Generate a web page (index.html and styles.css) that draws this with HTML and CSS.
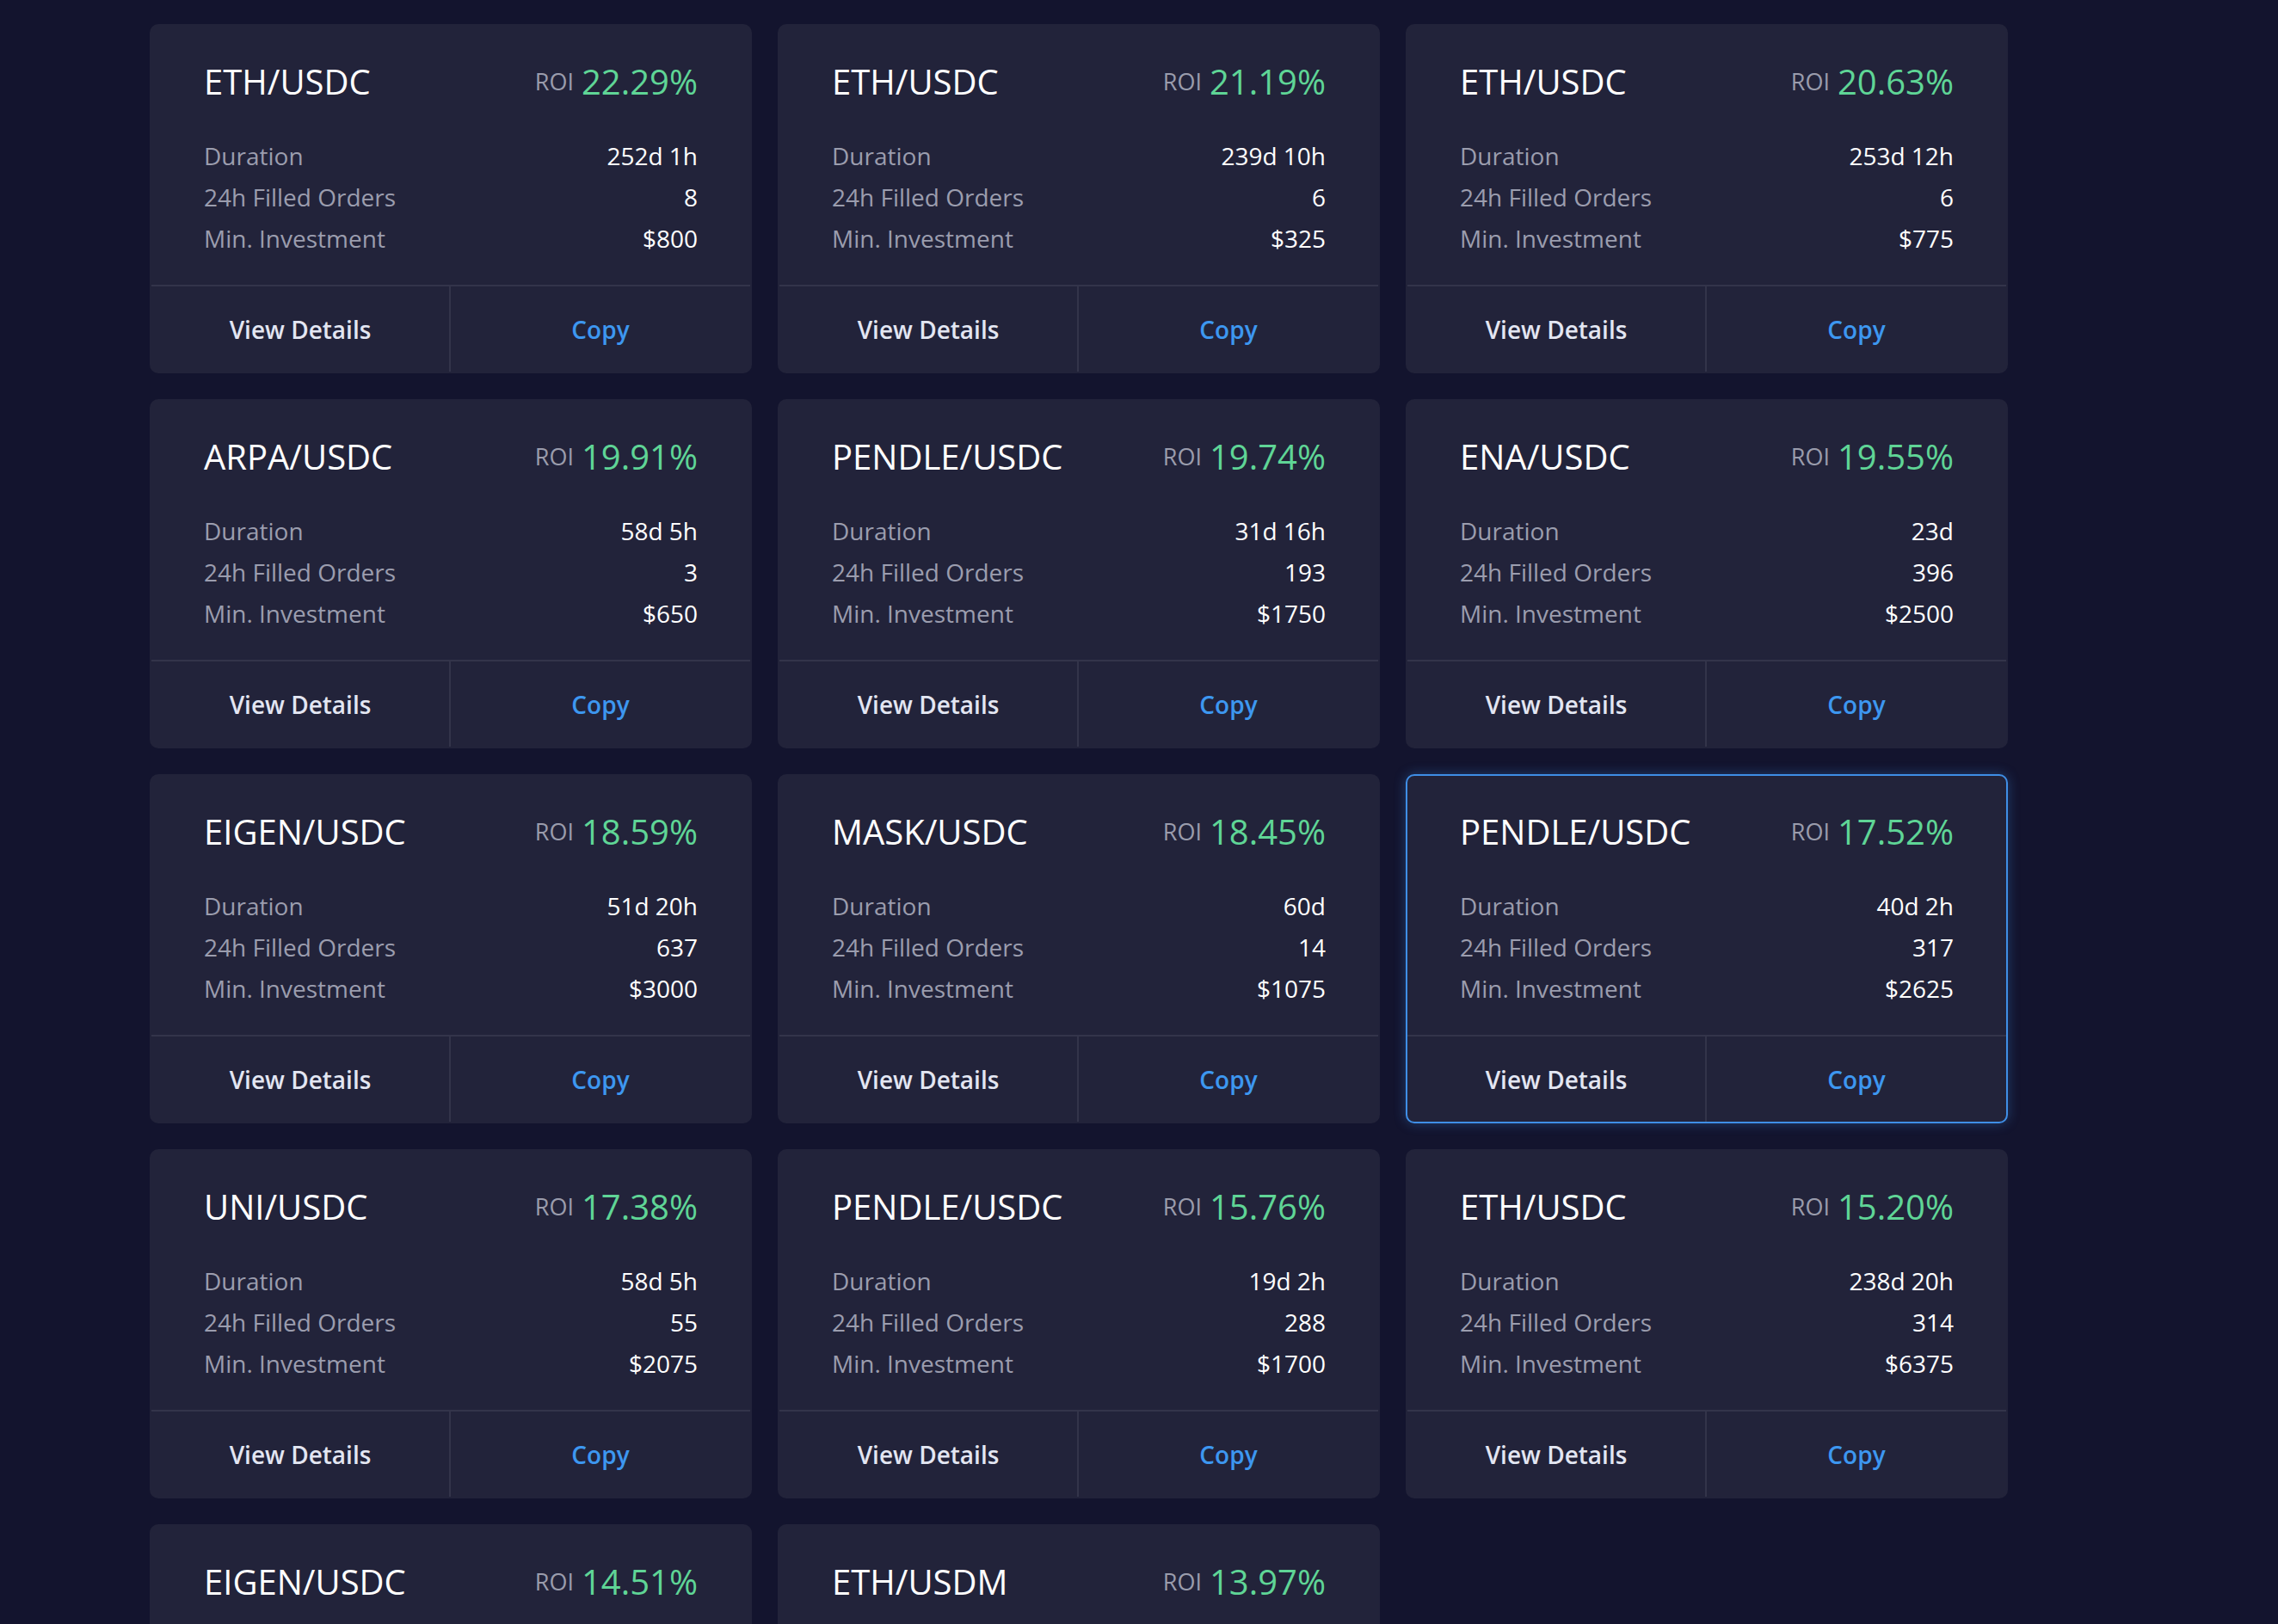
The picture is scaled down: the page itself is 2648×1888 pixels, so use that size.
FILE: index.html
```html
<!DOCTYPE html>
<html lang="en">
<head>
<meta charset="utf-8">
<title>Grid Bots</title>
<link rel="stylesheet" href="styles.css">
</head>
<body>
<main class="grid">
  <article class="card">
    <div class="card-body">
      <div class="card-head"><span class="pair">ETH/USDC</span><span class="roi"><span class="roi-label">ROI</span><span class="roi-value">22.29%</span></span></div>
      <div class="row"><span class="label">Duration</span><span class="value">252d 1h</span></div>
      <div class="row"><span class="label">24h Filled Orders</span><span class="value">8</span></div>
      <div class="row"><span class="label">Min. Investment</span><span class="value">$800</span></div>
    </div>
    <div class="card-foot"><button class="btn btn-details">View Details</button><button class="btn btn-copy">Copy</button></div>
  </article>
  <article class="card">
    <div class="card-body">
      <div class="card-head"><span class="pair">ETH/USDC</span><span class="roi"><span class="roi-label">ROI</span><span class="roi-value">21.19%</span></span></div>
      <div class="row"><span class="label">Duration</span><span class="value">239d 10h</span></div>
      <div class="row"><span class="label">24h Filled Orders</span><span class="value">6</span></div>
      <div class="row"><span class="label">Min. Investment</span><span class="value">$325</span></div>
    </div>
    <div class="card-foot"><button class="btn btn-details">View Details</button><button class="btn btn-copy">Copy</button></div>
  </article>
  <article class="card">
    <div class="card-body">
      <div class="card-head"><span class="pair">ETH/USDC</span><span class="roi"><span class="roi-label">ROI</span><span class="roi-value">20.63%</span></span></div>
      <div class="row"><span class="label">Duration</span><span class="value">253d 12h</span></div>
      <div class="row"><span class="label">24h Filled Orders</span><span class="value">6</span></div>
      <div class="row"><span class="label">Min. Investment</span><span class="value">$775</span></div>
    </div>
    <div class="card-foot"><button class="btn btn-details">View Details</button><button class="btn btn-copy">Copy</button></div>
  </article>
  <article class="card">
    <div class="card-body">
      <div class="card-head"><span class="pair">ARPA/USDC</span><span class="roi"><span class="roi-label">ROI</span><span class="roi-value">19.91%</span></span></div>
      <div class="row"><span class="label">Duration</span><span class="value">58d 5h</span></div>
      <div class="row"><span class="label">24h Filled Orders</span><span class="value">3</span></div>
      <div class="row"><span class="label">Min. Investment</span><span class="value">$650</span></div>
    </div>
    <div class="card-foot"><button class="btn btn-details">View Details</button><button class="btn btn-copy">Copy</button></div>
  </article>
  <article class="card">
    <div class="card-body">
      <div class="card-head"><span class="pair">PENDLE/USDC</span><span class="roi"><span class="roi-label">ROI</span><span class="roi-value">19.74%</span></span></div>
      <div class="row"><span class="label">Duration</span><span class="value">31d 16h</span></div>
      <div class="row"><span class="label">24h Filled Orders</span><span class="value">193</span></div>
      <div class="row"><span class="label">Min. Investment</span><span class="value">$1750</span></div>
    </div>
    <div class="card-foot"><button class="btn btn-details">View Details</button><button class="btn btn-copy">Copy</button></div>
  </article>
  <article class="card">
    <div class="card-body">
      <div class="card-head"><span class="pair">ENA/USDC</span><span class="roi"><span class="roi-label">ROI</span><span class="roi-value">19.55%</span></span></div>
      <div class="row"><span class="label">Duration</span><span class="value">23d</span></div>
      <div class="row"><span class="label">24h Filled Orders</span><span class="value">396</span></div>
      <div class="row"><span class="label">Min. Investment</span><span class="value">$2500</span></div>
    </div>
    <div class="card-foot"><button class="btn btn-details">View Details</button><button class="btn btn-copy">Copy</button></div>
  </article>
  <article class="card">
    <div class="card-body">
      <div class="card-head"><span class="pair">EIGEN/USDC</span><span class="roi"><span class="roi-label">ROI</span><span class="roi-value">18.59%</span></span></div>
      <div class="row"><span class="label">Duration</span><span class="value">51d 20h</span></div>
      <div class="row"><span class="label">24h Filled Orders</span><span class="value">637</span></div>
      <div class="row"><span class="label">Min. Investment</span><span class="value">$3000</span></div>
    </div>
    <div class="card-foot"><button class="btn btn-details">View Details</button><button class="btn btn-copy">Copy</button></div>
  </article>
  <article class="card">
    <div class="card-body">
      <div class="card-head"><span class="pair">MASK/USDC</span><span class="roi"><span class="roi-label">ROI</span><span class="roi-value">18.45%</span></span></div>
      <div class="row"><span class="label">Duration</span><span class="value">60d</span></div>
      <div class="row"><span class="label">24h Filled Orders</span><span class="value">14</span></div>
      <div class="row"><span class="label">Min. Investment</span><span class="value">$1075</span></div>
    </div>
    <div class="card-foot"><button class="btn btn-details">View Details</button><button class="btn btn-copy">Copy</button></div>
  </article>
  <article class="card card-active">
    <div class="card-body">
      <div class="card-head"><span class="pair">PENDLE/USDC</span><span class="roi"><span class="roi-label">ROI</span><span class="roi-value">17.52%</span></span></div>
      <div class="row"><span class="label">Duration</span><span class="value">40d 2h</span></div>
      <div class="row"><span class="label">24h Filled Orders</span><span class="value">317</span></div>
      <div class="row"><span class="label">Min. Investment</span><span class="value">$2625</span></div>
    </div>
    <div class="card-foot"><button class="btn btn-details">View Details</button><button class="btn btn-copy">Copy</button></div>
  </article>
  <article class="card">
    <div class="card-body">
      <div class="card-head"><span class="pair">UNI/USDC</span><span class="roi"><span class="roi-label">ROI</span><span class="roi-value">17.38%</span></span></div>
      <div class="row"><span class="label">Duration</span><span class="value">58d 5h</span></div>
      <div class="row"><span class="label">24h Filled Orders</span><span class="value">55</span></div>
      <div class="row"><span class="label">Min. Investment</span><span class="value">$2075</span></div>
    </div>
    <div class="card-foot"><button class="btn btn-details">View Details</button><button class="btn btn-copy">Copy</button></div>
  </article>
  <article class="card">
    <div class="card-body">
      <div class="card-head"><span class="pair">PENDLE/USDC</span><span class="roi"><span class="roi-label">ROI</span><span class="roi-value">15.76%</span></span></div>
      <div class="row"><span class="label">Duration</span><span class="value">19d 2h</span></div>
      <div class="row"><span class="label">24h Filled Orders</span><span class="value">288</span></div>
      <div class="row"><span class="label">Min. Investment</span><span class="value">$1700</span></div>
    </div>
    <div class="card-foot"><button class="btn btn-details">View Details</button><button class="btn btn-copy">Copy</button></div>
  </article>
  <article class="card">
    <div class="card-body">
      <div class="card-head"><span class="pair">ETH/USDC</span><span class="roi"><span class="roi-label">ROI</span><span class="roi-value">15.20%</span></span></div>
      <div class="row"><span class="label">Duration</span><span class="value">238d 20h</span></div>
      <div class="row"><span class="label">24h Filled Orders</span><span class="value">314</span></div>
      <div class="row"><span class="label">Min. Investment</span><span class="value">$6375</span></div>
    </div>
    <div class="card-foot"><button class="btn btn-details">View Details</button><button class="btn btn-copy">Copy</button></div>
  </article>
  <article class="card card-partial">
    <div class="card-body">
      <div class="card-head"><span class="pair">EIGEN/USDC</span><span class="roi"><span class="roi-label">ROI</span><span class="roi-value">14.51%</span></span></div>
    </div>
  </article>
  <article class="card card-partial">
    <div class="card-body">
      <div class="card-head"><span class="pair">ETH/USDM</span><span class="roi"><span class="roi-label">ROI</span><span class="roi-value">13.97%</span></span></div>
    </div>
  </article>
</main>
</body>
</html>
```
FILE: styles.css
```css
* { box-sizing: border-box; }

html, body {
  margin: 0;
  padding: 0;
  background: #13142e;
}

body {
  font-family: "Open Sans", "Noto Sans", "Liberation Sans", sans-serif;
  color: #ffffff;
  padding: 28px 0 0 174px;
  height: 1888px;
  overflow: hidden;
}

.grid {
  display: grid;
  grid-template-columns: repeat(3, 700px);
  column-gap: 30px;
  row-gap: 30px;
}

.card {
  background: #22233a;
  border: 2px solid transparent;
  border-radius: 10px;
  display: flex;
  flex-direction: column;
  height: 406px;
  overflow: hidden;
}

.card-partial {
  height: 120px;
  border-bottom-left-radius: 0;
  border-bottom-right-radius: 0;
}

.card-partial .card-body {
  border-bottom: none;
}

.card-active {
  border-color: #3f8ee6;
  box-shadow: 0 0 14px rgba(63, 142, 230, 0.35);
}

.card-body {
  padding: 38px 61px 30px 61px;
  border-bottom: 2px solid #33344a;
}

.card-head {
  display: flex;
  justify-content: space-between;
  align-items: center;
  height: 54px;
  margin-bottom: 35px;
}

.pair {
  font-size: 40px;
  line-height: 54px;
  font-weight: 400;
  color: #ffffff;
}

.roi {
  display: flex;
  align-items: center;
  gap: 9px;
}

.roi-label {
  font-size: 27px;
  color: #9a9cac;
  line-height: 38px;
}

.roi-value {
  font-size: 40px;
  line-height: 54px;
  color: #5fd596;
}

.row {
  display: flex;
  justify-content: space-between;
  font-size: 28px;
  line-height: 48px;
}

.label { color: #9b9dae; }
.value { color: #ffffff; }

.card-foot {
  flex: 1;
  display: grid;
  grid-template-columns: 1fr 1fr;
}

.btn {
  background: transparent;
  border: none;
  font-family: inherit;
  font-size: 28px;
  font-weight: 600;
  cursor: pointer;
  padding: 0;
}

.btn-details {
  color: #e3e6f2;
  border-right: 2px solid #33344a;
}

.btn-copy {
  color: #3d97f0;
}
```
